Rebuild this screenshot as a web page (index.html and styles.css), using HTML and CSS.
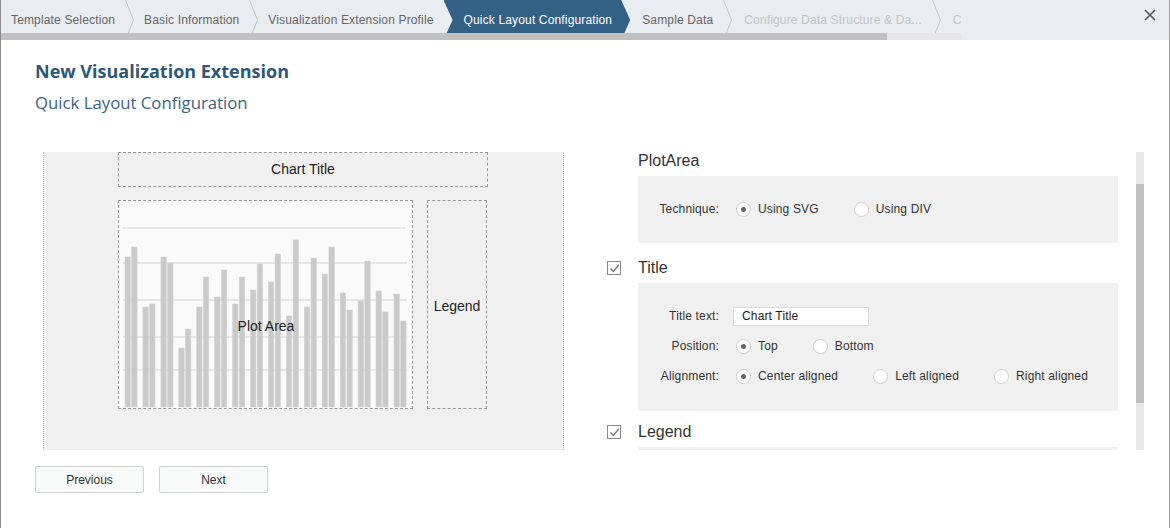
FILE: index.html
```html
<!DOCTYPE html>
<html>
<head>
<meta charset="utf-8">
<title>New Visualization Extension</title>
<link rel="stylesheet" href="styles.css">
</head>
<body>
<div class="window">
  <div class="topbar">
    <div class="steps-wrap">
      <div class="steps">
        <span class="step">Template Selection</span>
        <svg class="sep" width="9" height="40" viewBox="0 0 9 40"><polyline points="0.5,0 8.5,20 0.5,40"/></svg>
        <span class="step">Basic Information</span>
        <svg class="sep" width="9" height="40" viewBox="0 0 9 40"><polyline points="0.5,0 8.5,20 0.5,40"/></svg>
        <span class="step before-active">Visualization Extension Profile</span>
        <span class="step active">Quick Layout Configuration</span>
        <span class="step after-active">Sample Data</span>
        <svg class="sep" width="9" height="40" viewBox="0 0 9 40"><polyline points="0.5,0 8.5,20 0.5,40"/></svg>
        <span class="step disabled wide-left">Configure Data Structure &amp; Da...</span>
        <svg class="sep" width="9" height="40" viewBox="0 0 9 40"><polyline points="0.5,0 8.5,20 0.5,40"/></svg>
        <span class="step disabled wide-left">C</span>
      </div>
      <div class="hscroll"><div class="hthumb"></div></div>
    </div>
    <button class="close" aria-label="Close">
      <svg width="12" height="12" viewBox="0 0 12 12"><path d="M1 1 L11 11 M11 1 L1 11"/></svg>
    </button>
  </div>

  <div class="main">
    <h1 class="title">New Visualization Extension</h1>
    <h2 class="subtitle">Quick Layout Configuration</h2>

    <div class="content">
      <div class="chart-panel">
        <div class="chart-title">Chart Title</div>
        <div class="chart-row">
          <div class="plot-box">
            <svg class="plot-svg" width="293" height="207" viewBox="0 0 293 207">
              <g class="grid">
                <line x1="4" y1="27" x2="286" y2="27"/>
                <line x1="4" y1="62" x2="288" y2="62"/>
                <line x1="4" y1="99" x2="288" y2="99"/>
                <line x1="4" y1="136" x2="288" y2="136"/>
                <line x1="4" y1="169" x2="288" y2="169"/>
              </g>
              <g class="bars">
                <rect x="6.0" y="56" width="5.4" height="150"/><rect x="12.7" y="46" width="5.4" height="160"/>
                <rect x="23.9" y="106" width="5.4" height="100"/><rect x="30.6" y="103" width="5.4" height="103"/>
                <rect x="41.9" y="56" width="5.4" height="150"/><rect x="48.6" y="62" width="5.4" height="144"/>
                <rect x="59.8" y="147" width="5.4" height="59"/><rect x="66.5" y="128" width="5.4" height="78"/>
                <rect x="77.7" y="106" width="5.4" height="100"/><rect x="84.4" y="76" width="5.4" height="130"/>
                <rect x="95.7" y="96" width="5.4" height="110"/><rect x="102.4" y="69" width="5.4" height="137"/>
                <rect x="113.6" y="103" width="5.4" height="103"/><rect x="120.3" y="76" width="5.4" height="130"/>
                <rect x="131.5" y="89" width="5.4" height="117"/><rect x="138.2" y="63" width="5.4" height="143"/>
                <rect x="149.4" y="81" width="5.4" height="125"/><rect x="156.1" y="53" width="5.4" height="153"/>
                <rect x="167.4" y="115" width="5.4" height="91"/><rect x="174.1" y="39" width="5.4" height="167"/>
                <rect x="185.3" y="106" width="5.4" height="100"/><rect x="192.0" y="57" width="5.4" height="149"/>
                <rect x="203.2" y="73" width="5.4" height="133"/><rect x="209.9" y="46" width="5.4" height="160"/>
                <rect x="221.2" y="92" width="5.4" height="114"/><rect x="227.9" y="109" width="5.4" height="97"/>
                <rect x="239.1" y="100" width="5.4" height="106"/><rect x="245.8" y="60" width="5.4" height="146"/>
                <rect x="257.0" y="90" width="5.4" height="116"/><rect x="263.7" y="111" width="5.4" height="95"/>
                <rect x="275.0" y="93" width="5.4" height="113"/><rect x="281.7" y="120" width="5.4" height="86"/>
              </g>
              <text class="plot-label" x="147" y="130" text-anchor="middle">Plot Area</text>
            </svg>
          </div>
          <div class="legend-box">Legend</div>
        </div>
      </div>

      <div class="settings">
        <div class="settings-scroll">
          <div class="sec-head first"><span class="cb-space"></span><span class="sec-title">PlotArea</span></div>
          <div class="sec-box">
            <div class="row">
              <span class="lbl">Technique:</span>
              <span class="opt"><span class="radio checked"></span><span class="opt-text">Using SVG</span></span>
              <span class="opt"><span class="radio"></span><span class="opt-text">Using DIV</span></span>
            </div>
          </div>

          <div class="sec-head mid"><span class="checkbox"><svg width="11" height="11" viewBox="0 0 11 11"><path d="M1.5 5.5 L4.5 8.5 L9.8 1.8"/></svg></span><span class="sec-title">Title</span></div>
          <div class="sec-box tall">
            <div class="row">
              <span class="lbl">Title text:</span>
              <span class="input">Chart Title</span>
            </div>
            <div class="row">
              <span class="lbl">Position:</span>
              <span class="opt"><span class="radio checked"></span><span class="opt-text">Top</span></span>
              <span class="opt"><span class="radio"></span><span class="opt-text">Bottom</span></span>
            </div>
            <div class="row">
              <span class="lbl">Alignment:</span>
              <span class="opt"><span class="radio checked"></span><span class="opt-text">Center aligned</span></span>
              <span class="opt"><span class="radio"></span><span class="opt-text">Left aligned</span></span>
              <span class="opt"><span class="radio"></span><span class="opt-text">Right aligned</span></span>
            </div>
          </div>

          <div class="sec-head last"><span class="checkbox"><svg width="11" height="11" viewBox="0 0 11 11"><path d="M1.5 5.5 L4.5 8.5 L9.8 1.8"/></svg></span><span class="sec-title">Legend</span></div>
          <div class="sec-box empty"></div>
        </div>
        <div class="vscroll"><div class="vthumb"></div></div>
      </div>
    </div>

    <div class="buttons">
      <button class="btn">Previous</button>
      <button class="btn">Next</button>
    </div>
  </div>
</div>
</body>
</html>
```

FILE: styles.css
```css
* { box-sizing: border-box; }

html, body {
  margin: 0;
  padding: 0;
  background: #ffffff;
}

body {
  width: 1170px;
  height: 528px;
  overflow: hidden;
  font-family: "Liberation Sans", Arial, sans-serif;
  font-size: 12px;
  color: #333333;
}

.window {
  width: 1170px;
  height: 528px;
  border-left: 1px solid #8c8c8c;
  border-right: 1px solid #a0a0a0;
  overflow: hidden;
}

/* ---------- top bar ---------- */
.topbar {
  display: flex;
  height: 40px;
  background: #e9edf1;
}

.steps-wrap {
  width: 961px;
  flex: none;
}

.steps {
  display: flex;
  align-items: flex-start;
  height: 33px;
  overflow: hidden;
  white-space: nowrap;
}

.step {
  flex: none;
  height: 40px;
  line-height: 40px;
  padding: 0 10px 0 10px;
  color: #666666;
  letter-spacing: 0.15px;
}

.step.before-active { padding-right: 10px; }

.step.active {
  background: #336085;
  color: #ffffff;
  padding: 0 18px 0 20px;
  clip-path: polygon(0 0, calc(100% - 9px) 0, 100% 50%, calc(100% - 9px) 100%, 0 100%, 9px 50%);
}

.step.after-active { padding-left: 12px; }

.step.wide-left { padding-left: 12px; }

.step.disabled { color: #c2c4c6; }

.sep {
  flex: none;
  display: block;
}

.sep polyline {
  fill: none;
  stroke: #c3c7cb;
  stroke-width: 1;
}

.hscroll {
  height: 7px;
  background: #e6e6e6;
}

.hthumb {
  width: 886px;
  height: 7px;
  background: #c1c1c1;
}

.close {
  margin-left: auto;
  margin-right: 13px;
  margin-top: 9px;
  width: 12px;
  height: 12px;
  padding: 0;
  border: 0;
  background: transparent;
  display: block;
}

.close svg { display: block; }

.close path {
  stroke: #555555;
  stroke-width: 1.6;
  fill: none;
}

/* ---------- heading ---------- */
.main {
  padding: 0 0 0 34px;
}

.title {
  margin: 20px 0 0 0;
  font-family: "Open Sans", "Noto Sans", sans-serif;
  font-weight: 700;
  font-size: 18px;
  line-height: 22px;
  color: #2e587a;
}

.subtitle {
  margin: 9px 0 0 0;
  font-family: "Open Sans", "Noto Sans", sans-serif;
  font-weight: 400;
  font-size: 16.75px;
  line-height: 24px;
  color: #3d6283;
}

/* ---------- content ---------- */
.content {
  display: flex;
  margin-top: 37px;
  height: 298px;
}

.chart-panel {
  flex: none;
  width: 521px;
  height: 298px;
  margin-left: 8px;
  padding-left: 74px;
  background: #f0f0f0;
  border-left: 1px dotted #bcbcbc;
  border-right: 1px dotted #bcbcbc;
}

.chart-title {
  width: 370px;
  height: 35px;
  border: 1px dashed #9a9a9a;
  text-align: center;
  line-height: 33px;
  font-size: 14px;
  color: #222222;
}

.chart-row {
  display: flex;
  margin-top: 13px;
}

.plot-box {
  width: 295px;
  height: 209px;
  border: 1px dashed #9a9a9a;
  background: #fafafa;
}

.plot-svg { display: block; }

.grid line {
  stroke: #e6e6e6;
  stroke-width: 2;
}

.bars rect {
  fill: #cacaca;
  stroke: #d4d4d4;
  stroke-width: 0.6;
}

.plot-label {
  font-family: "Liberation Sans", Arial, sans-serif;
  font-size: 14px;
  fill: #222222;
}

.legend-box {
  width: 60px;
  height: 209px;
  margin-left: 14px;
  border: 1px dashed #9a9a9a;
  padding-top: 97px;
  text-align: center;
  font-size: 14px;
  line-height: 16px;
  color: #222222;
}

/* ---------- settings ---------- */
.settings {
  flex: none;
  display: flex;
  width: 544px;
  height: 298px;
  margin-left: 36px;
  overflow: hidden;
}

.settings-scroll {
  flex: 1;
  height: 298px;
  overflow: hidden;
  padding-right: 18px;
  letter-spacing: 0.15px;
}

.sec-head {
  display: flex;
  align-items: center;
  height: 20px;
  margin-left: 7px;
  margin-bottom: 5px;
}

.sec-head.first { margin-top: -1px; }
.sec-head.mid { margin-top: 15px; }
.sec-head.last { margin-top: 11px; }

.cb-space {
  width: 14px;
  height: 14px;
  flex: none;
}

.checkbox {
  width: 14px;
  height: 14px;
  flex: none;
  border: 1px solid #8a8a8a;
  background: #ffffff;
  display: flex;
  align-items: center;
  justify-content: center;
}

.checkbox svg { display: block; }

.checkbox path {
  fill: none;
  stroke: #7a7a7a;
  stroke-width: 1.4;
}

.sec-title {
  margin-left: 17px;
  font-size: 16px;
  line-height: 20px;
  color: #333333;
  letter-spacing: 0;
}

.sec-box {
  margin-left: 38px;
  background: #f0f0f0;
  padding: 18px 0 19px 20px;
}

.sec-box.tall { padding-bottom: 20px; }

.sec-box.empty { height: 60px; }

.row {
  display: flex;
  align-items: center;
  height: 30px;
  white-space: nowrap;
}

.lbl {
  flex: none;
  width: 61px;
  text-align: right;
  margin-right: 14px;
  color: #333333;
}

.input {
  flex: none;
  width: 136px;
  height: 19px;
  background: #ffffff;
  border: 1px solid #dadada;
  padding-left: 8px;
  line-height: 17px;
  color: #222222;
}

.opt {
  flex: none;
  display: flex;
  align-items: center;
  margin-right: 35px;
}

.radio {
  flex: none;
  width: 15px;
  height: 15px;
  margin-left: 3px;
  border-radius: 50%;
  border: 1px solid #cfcfcf;
  background: #ffffff;
  display: flex;
  align-items: center;
  justify-content: center;
}

.opt + .opt .radio { margin-left: 0; }

.radio.checked::after {
  content: "";
  width: 5px;
  height: 5px;
  border-radius: 50%;
  background: #666666;
}

.opt-text {
  margin-left: 7px;
  color: #333333;
  white-space: nowrap;
}

.vscroll {
  flex: none;
  width: 8px;
  height: 298px;
  background: #e8e8e8;
}

.vthumb {
  margin-top: 32px;
  height: 219px;
  background: #c1c1c1;
}

/* ---------- buttons ---------- */
.buttons {
  display: flex;
  gap: 15px;
  margin-top: 16px;
}

.btn {
  width: 109px;
  height: 27px;
  background: #f8f9f9;
  border: 1px solid #d2d2d2;
  border-radius: 2px;
  font-family: "Liberation Sans", Arial, sans-serif;
  font-size: 12px;
  color: #333333;
  padding: 0;
}
```
